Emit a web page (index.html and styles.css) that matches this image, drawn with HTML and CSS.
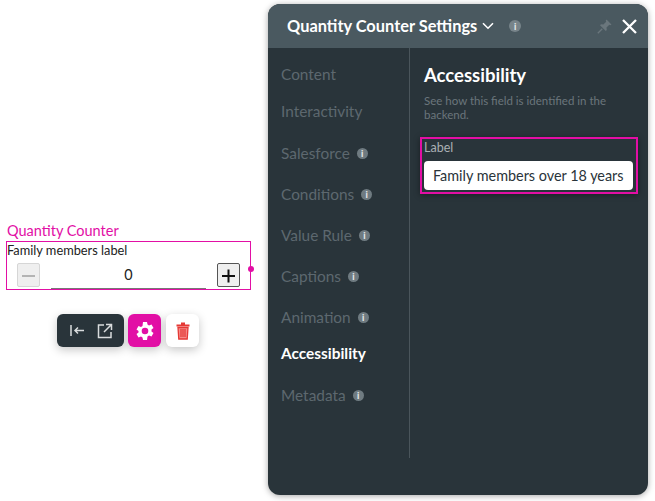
FILE: index.html
```html
<!DOCTYPE html>
<html lang="en">
<head>
<meta charset="utf-8">
<title>Quantity Counter Settings</title>
<link rel="stylesheet" href="styles.css">
</head>
<body>
<main class="canvas">
  <section class="widget">
    <div class="widget-title">Quantity Counter</div>
    <div class="counter">
      <div class="counter-label">Family members label</div>
      <div class="counter-row">
        <button class="step step-off"><svg width="15" height="15" viewBox="0 0 15 15"><path d="M1 8H14" stroke="#b4b4b4" stroke-width="2"/></svg></button>
        <div class="counter-value">0</div>
        <button class="step"><svg width="15" height="15" viewBox="0 0 15 15"><path d="M1 8H14M7.500 1.500V14.500" stroke="#111" stroke-width="2"/></svg></button>
      </div>
      <span class="handle"></span>
    </div>
    <div class="toolbar">
      <div class="tool tool-dark">
        <svg width="16" height="16" viewBox="0 0 16 16" fill="none" stroke="#d9dcdd" stroke-width="1.500"><path d="M2 2V13M15 7.500H6M9 4.500L6 7.500L9 10.500"/></svg>
        <svg width="16" height="16" viewBox="0 0 16 16" fill="none" stroke="#d9dcdd" stroke-width="1.500"><path d="M7 2H1.500V14.500H14V9M9 1.500H14.500V7M14.500 1.500L7 9"/></svg>
      </div>
      <div class="tool tool-pink">
        <svg width="20" height="20" viewBox="0 0 20 20"><path fill="#fff" fill-rule="evenodd" d="M8 1h4l.5 2.600 1.500.8 2.500-.9 2 3.400-2 1.700v1.800l2 1.700-2 3.400-2.500-.9-1.500.8L12 19H8l-.5-2.600-1.500-.8-2.500.9-2-3.400 2-1.700V10.100l-2-1.700 2-3.400 2.500.9 1.500-.8zM10 6.700a3.300 3.300 0 1 0 0 6.600a3.300 3.300 0 1 0 0-6.600z"/></svg>
      </div>
      <div class="tool tool-white">
        <svg width="14" height="18" viewBox="0 0 14 18" fill="none" stroke="#e53935"><path d="M5 1.500H9M.5 3.500H13.500" stroke-width="2"/><path d="M2 5.500L2.800 17H11.200L12 5.500Z" fill="#f58a88" stroke-width="1.300"/><path d="M5 7V15M7 7V15M9 7V15" stroke-width="1.200"/></svg>
      </div>
    </div>
  </section>

  <aside class="panel">
    <header class="panel-head">
      <h1 class="panel-title">Quantity Counter Settings</h1>
      <svg class="chev" width="12" height="8" viewBox="0 0 12 8" fill="none" stroke="#fff" stroke-width="1.600"><path d="M1 1.200L6 6.200L11 1.200"/></svg>
      <span class="info info-head">i</span>
      <span class="head-spacer"></span>
      <svg class="pin" width="15" height="15" viewBox="0 0 15 15" fill="#6a767c"><path d="M9.500 .5L14.500 5.500L13.300 6.300L12.300 5.800L9.500 8.600L9.800 11L8.800 12L3 6.200L4 5.200L6.400 5.500L9.200 2.700L8.700 1.700Z"/><path d="M5.300 9.700L.8 14.200" stroke="#6a767c" stroke-width="1.300"/></svg>
      <svg class="close" width="15" height="15" viewBox="0 0 15 15" fill="none" stroke="#fff" stroke-width="2.300"><path d="M1 1L14 14M14 1L1 14"/></svg>
    </header>
    <div class="panel-body">
      <nav class="nav">
        <a class="nav-item">Content</a>
        <a class="nav-item">Interactivity</a>
        <a class="nav-item nav-info">Salesforce <span class="info">i</span></a>
        <a class="nav-item nav-info">Conditions <span class="info">i</span></a>
        <a class="nav-item nav-info">Value Rule <span class="info">i</span></a>
        <a class="nav-item nav-info">Captions <span class="info">i</span></a>
        <a class="nav-item nav-info">Animation <span class="info">i</span></a>
        <a class="nav-item nav-active">Accessibility</a>
        <a class="nav-item nav-info">Metadata <span class="info">i</span></a>
      </nav>
      <div class="content">
        <h2 class="content-title">Accessibility</h2>
        <p class="content-help">See how this field is identified in the backend.</p>
        <div class="field">
          <div class="field-label">Label</div>
          <div class="field-input">Family members over 18 years</div>
        </div>
      </div>
    </div>
  </aside>
</main>
</body>
</html>
```
FILE: styles.css
```css
* { box-sizing: border-box; }
html, body { margin: 0; height: 100%; }
body { background: #fff; font-family: Lato, "Liberation Sans", sans-serif; overflow: hidden; }
.canvas { display: flex; align-items: flex-start; width: 655px; height: 501px; padding: 4px 7px 6px 6px; }

.widget { width: 262px; flex: none; padding-top: 217px; }
.widget-title { color: #e20fa5; font-size: 14.500px; line-height: 20px; padding-left: 1px; }
.counter { position: relative; width: 245px; height: 49px; border: 1px solid #e20fa5; }
.counter-label { font-size: 12.800px; line-height: 17px; color: #222; }
.counter-row { display: flex; align-items: flex-start; padding: 4px 10px 0; }
.step { width: 23px; height: 24px; padding: 0; display: flex; align-items: center; justify-content: center; border: 1px solid #555; border-radius: 2px; background: #efefef; flex: none; }
.step-off { border-color: #d6d6d6; }
.counter-value { flex: 1; margin: 0 11px; height: 26px; line-height: 24px; text-align: center; font-size: 14.400px; color: #222; border-bottom: 1px solid #777; }
.handle { position: absolute; right: -4px; top: 24px; width: 6px; height: 6px; border-radius: 50%; background: #e20fa5; }

.toolbar { display: flex; gap: 4px; margin: 24px 0 0 51px; }
.tool { height: 33px; border-radius: 6px; display: flex; align-items: center; justify-content: center; box-shadow: 0 3px 10px rgba(0,0,0,.22); }
.tool-dark { width: 67px; gap: 12px; background: #29343a; padding-left: 1px; }
.tool-pink { width: 33px; background: #e20fa5; }
.tool-white { width: 33px; margin-left: 1px; background: #fff; }

.panel { width: 380px; height: 491px; flex: none; background: #29343a; border-radius: 12px; overflow: hidden; box-shadow: 0 1px 6px rgba(0,0,0,.35); color: #fff; }
.panel-head { height: 44px; background: #4a5960; display: flex; align-items: center; padding: 0 11px 0 19px; }
.panel-title { margin: 0; font-size: 16.400px; font-weight: 700; line-height: 44px; }
.chev { margin-left: 5px; }
.info { display: inline-flex; align-items: center; justify-content: center; width: 11px; height: 11px; border-radius: 50%; background: #6f7b81; color: #e4e7e8; font-size: 9px; font-weight: 900; line-height: 1; }
.info-head { margin-left: 15px; width: 12px; height: 12px; background: #78848a; }
.head-spacer { flex: 1; }
.pin { margin-right: 10px; }

.panel-body { display: flex; height: 410px; }
.nav { width: 142px; flex: none; border-right: 1px solid #4a555b; padding: 7px 0 0 13px; }
.nav-item { display: flex; align-items: center; gap: 3px; height: 37px; font-size: 15.400px; color: #5d686f; white-space: pre; }
.nav-info { height: 41px; padding-top: 7px; }
.nav-active { color: #fff; font-weight: 700; }

.content { flex: 1; padding: 16px 10px 0 14px; min-width: 0; }
.content-title { margin: 0; font-size: 18.500px; font-weight: 700; line-height: 22px; }
.content-help { margin: 8px 0 0; font-size: 11.500px; line-height: 14px; color: #6b767c; width: 200px; }
.field { margin: 15px 0 0 -4px; width: 218px; height: 57px; border: 2px solid #e20fa5; padding: 0 3px 0 2px; box-shadow: 0 1px 6px rgba(0,0,0,.4); }
.field-label { font-size: 12.500px; line-height: 18px; color: #a9b0b4; }
.field-input { height: 29px; margin-top: 4px; background: #fff; border-radius: 4px; color: #2a343a; font-size: 14.400px; line-height: 29px; padding-left: 9px; white-space: nowrap; }
```
